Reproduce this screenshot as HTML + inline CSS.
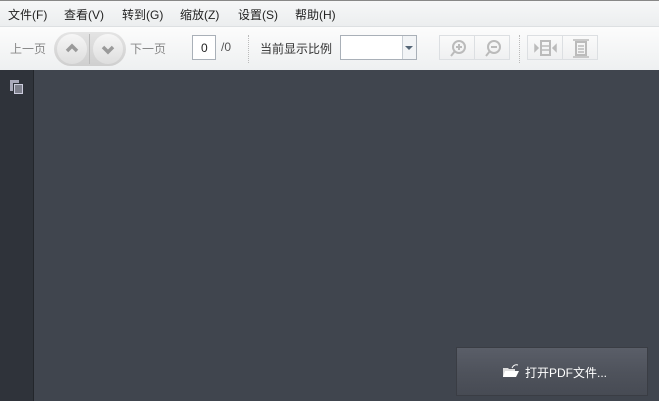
<!DOCTYPE html>
<html><head><meta charset="utf-8"><style>
*{margin:0;padding:0;box-sizing:border-box}
body{width:659px;height:401px;overflow:hidden;font-family:"Liberation Sans","Noto Sans CJK SC",sans-serif;font-size:12px;background:#40454e;position:relative}
.menu{position:absolute;left:0;top:0;width:659px;height:27px;background:linear-gradient(#f6f7f8,#eceeef);border-top:1px solid #888;border-bottom:1px solid #dde0e2;color:#222}
.menu span{position:absolute;top:5px}
.tb{position:absolute;left:0;top:27px;width:659px;height:43px;background:linear-gradient(#fcfcfc,#eef0f1);color:#555}
.tb .t{position:absolute;top:13px}
.pill{position:absolute;left:54px;top:5px;width:72px;height:34px;border-radius:17px;background:linear-gradient(#e4e4e4,#cfcfcf)}
.circ{position:absolute;top:7px;width:30px;height:30px;border-radius:50%;background:linear-gradient(#f6f6f6,#dedede)}
.box{position:absolute;background:#fff;border:1px solid #a9b0b8}
.btn{position:absolute;top:8px;height:25px;border:1px solid #dcdfe2;background:linear-gradient(#fafafa,#eff0f1)}
.side{position:absolute;left:0;top:70px;width:34px;height:331px;background:#2f333a;border-right:1px solid #23262b}
.open{position:absolute;left:456px;top:347px;width:192px;height:49px;background:linear-gradient(#5a5e68,#4e525b 55%,#474b54);border:1px solid #3a3d44;color:#fff;font-size:12px}
</style></head><body>
<div class="menu">
<span style="left:8px">文件(F)</span><span style="left:64px">查看(V)</span><span style="left:122px">转到(G)</span><span style="left:180px">缩放(Z)</span><span style="left:238px">设置(S)</span><span style="left:295px">帮助(H)</span>
</div>
<div class="tb">
<span class="t" style="left:10px;color:#888">上一页</span>
<div class="pill"></div>
<div style="position:absolute;left:89px;top:7px;width:1px;height:30px;background:#bbb"></div>
<div class="circ" style="left:57px"><svg width="30" height="30" style="position:absolute;left:0;top:0"><path d="M10 17l5-5 5 5" stroke="#9a9a9a" stroke-width="3.5" fill="none"/></svg></div>
<div class="circ" style="left:93px"><svg width="30" height="30" style="position:absolute;left:0;top:0"><path d="M10 13l5 5 5-5" stroke="#9a9a9a" stroke-width="3.5" fill="none"/></svg></div>
<span class="t" style="left:130px;color:#888">下一页</span>
<div class="box" style="left:192px;top:8px;width:24px;height:25px"><span style="position:absolute;left:8px;top:5px;color:#222">0</span></div>
<span class="t" style="left:221px">/0</span>
<div style="position:absolute;left:248px;top:8px;height:28px;border-left:1px dotted #bbb"></div>
<span class="t" style="left:260px;color:#333">当前显示比例</span>
<div class="box" style="left:340px;top:8px;width:77px;height:25px"><div style="position:absolute;left:61px;top:0;width:14px;height:23px;border-left:1px solid #c8ced4;background:#f2f4f6;box-sizing:border-box"></div><div style="position:absolute;left:64px;top:10px;border:4px solid transparent;border-top:4px solid #567;border-bottom:0"></div></div>
<div class="btn" style="left:439px;width:36px"><svg width="36" height="25"><circle cx="19" cy="11" r="6" stroke="#bbb" stroke-width="2" fill="none"/><path d="M15 15l-4 5M16 11h6M19 8v6" stroke="#bbb" stroke-width="2"/></svg></div>
<div class="btn" style="left:474px;width:36px"><svg width="36" height="25"><circle cx="19" cy="11" r="6" stroke="#bbb" stroke-width="2" fill="none"/><path d="M15 15l-4 5M16 11h6" stroke="#bbb" stroke-width="2"/></svg></div>
<div style="position:absolute;left:519px;top:8px;height:28px;border-left:1px dotted #bbb"></div>
<div class="btn" style="left:527px;width:36px"><svg width="36" height="25"><rect x="13" y="5" width="9" height="14" stroke="#bbb" stroke-width="2" fill="none"/><path d="M14 10h7M14 14h7M10 12l-3-3v6zM25 12l3-3v6z" stroke="#bbb" stroke-width="1.5" fill="#bbb"/></svg></div>
<div class="btn" style="left:562px;width:36px"><svg width="36" height="25"><rect x="13" y="6" width="10" height="13" stroke="#bbb" stroke-width="2" fill="none"/><path d="M15 10h6M15 13h6M15 16h6M10 4h16M10 21h16" stroke="#bbb" stroke-width="1.5"/></svg></div>
</div>
<div class="side"><svg width="20" height="20" style="position:absolute;left:9px;top:9px"><rect x="1" y="1" width="9" height="11" fill="#aab"/><rect x="4" y="4" width="10" height="11" fill="#2f333a"/><rect x="5" y="5" width="9" height="10" fill="#ccd"/><path d="M6 7h7M6 9h7M6 11h7M6 13h7" stroke="#2f333a"/></svg></div>
<div class="open"><svg width="18" height="16" style="position:absolute;left:45px;top:15px"><path d="M1 5h5l1 1h6v8H1z" fill="#ddd"/><path d="M3 8h14l-3 6H1z" fill="#fff"/><path d="M10 5q2-4 6-3" stroke="#fff" fill="none"/></svg><span style="position:absolute;left:68px;top:16px">打开PDF文件...</span></div>
</body></html>
